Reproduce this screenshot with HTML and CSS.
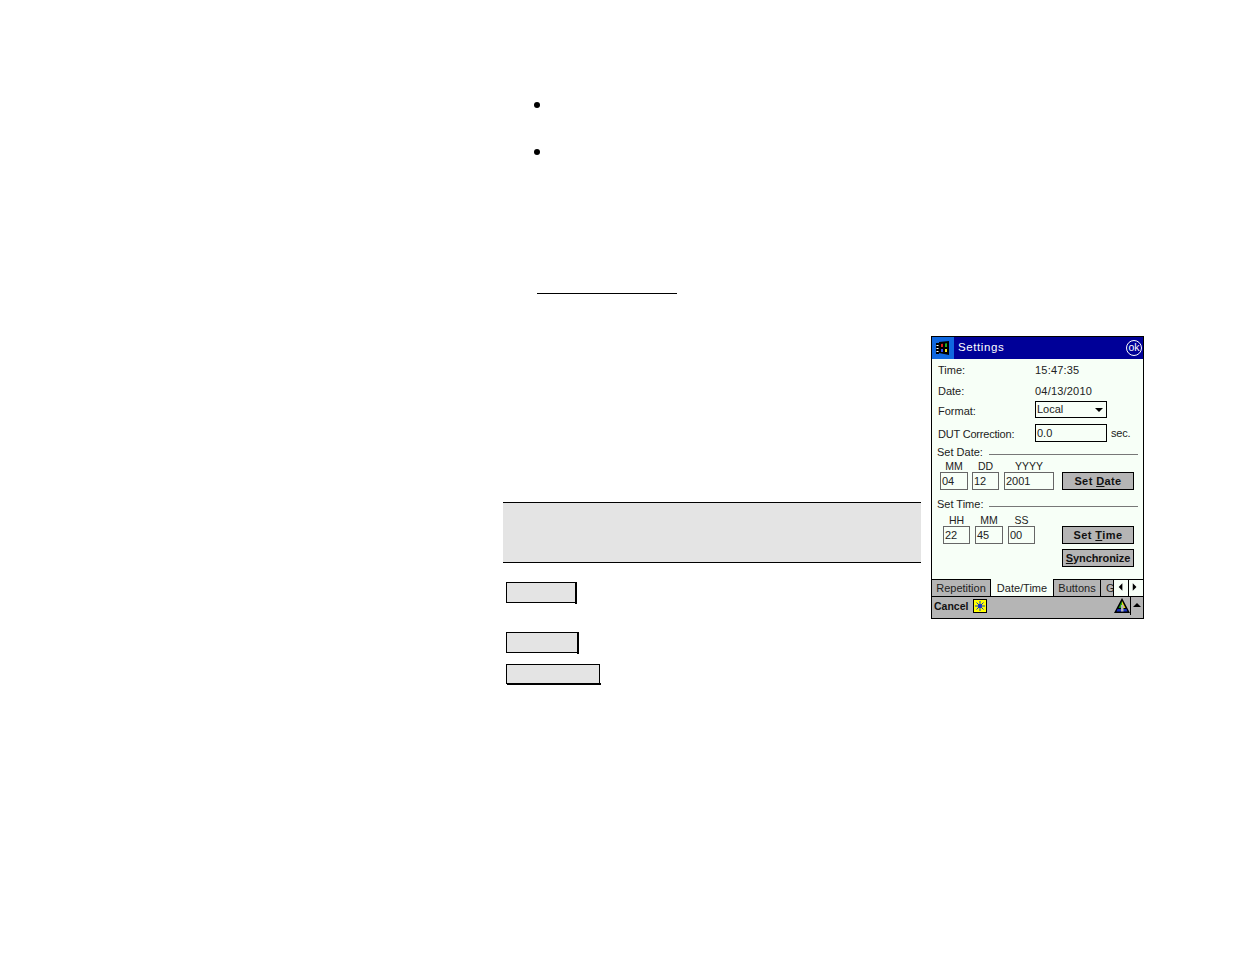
FILE: index.html
```html
<!DOCTYPE html>
<html lang="en">
<head>
    <meta charset="UTF-8">
    <title>Settings</title>
    <link rel="stylesheet" href="styles.css">
</head>
<body>
    <div class="page">
        <div class="text-col">
            <ul class="bullets">
                <li></li>
                <li></li>
            </ul>
            <div class="link-rule"></div>
            <div class="note-band"></div>
            <div class="key key-first"></div>
            <div class="key key-second"></div>
            <div class="key key-wide"></div>
        </div>

        <div class="device">
            <div class="titlebar">
                <div class="start-btn">
                    <svg width="16" height="16" viewBox="0 0 16 16">
                        <path d="M1 3h3v11H1zM4 2l10-1v14L4 13z" fill="#000"/>
                        <path d="M1.500 5h2v1h-2zM1.500 8h2v1h-2zM1.500 11h2v1h-2z" fill="#fff"/>
                        <path d="M6 4l2-.3V7H6z" fill="#e02020"/>
                        <path d="M10 3.500l2-.3V7h-2z" fill="#20b020"/>
                        <path d="M6 9h2v3H6z" fill="#3050f0"/>
                        <path d="M10 9h2v3h-2z" fill="#f0e020"/>
                    </svg>
                </div>
                <span class="title">Settings</span>
                <span class="ok-btn">ok</span>
            </div>

            <div class="form">
                <div class="row row-time"><span>Time:</span><span class="value">15:47:35</span></div>
                <div class="row row-date"><span>Date:</span><span class="value">04/13/2010</span></div>
                <div class="row row-format">
                    <span class="row-label">Format:</span>
                    <div class="field select-field">Local<i class="select-arrow"></i></div>
                </div>
                <div class="row row-dut">
                    <span class="dut-label">DUT Correction:</span>
                    <div class="field dut-field">0.0</div>
                    <span class="unit">sec.</span>
                </div>

                <div class="group-head"><span>Set Date:</span><i></i></div>
                <div class="entry-row date-entry">
                    <div class="entry w-mm"><label>MM</label><div class="field">04</div></div>
                    <div class="entry w-dd"><label>DD</label><div class="field">12</div></div>
                    <div class="entry w-yyyy"><label>YYYY</label><div class="field">2001</div></div>
                    <button class="pda-btn">Set <u>D</u>ate</button>
                </div>

                <div class="group-head head-time"><span>Set Time:</span><i></i></div>
                <div class="entry-row time-entry">
                    <div class="entry w-hh"><label>HH</label><div class="field">22</div></div>
                    <div class="entry w-min"><label>MM</label><div class="field">45</div></div>
                    <div class="entry w-ss"><label>SS</label><div class="field">00</div></div>
                    <button class="pda-btn">Set <u>T</u>ime</button>
                </div>
                <div class="sync-row">
                    <button class="pda-btn sync-btn"><u>S</u>ynchronize</button>
                </div>
            </div>

            <div class="tabs">
                <div class="tab tab-rep">Repetition</div>
                <div class="tab tab-active">Date/Time</div>
                <div class="tab tab-buttons">Buttons</div>
                <div class="tab tab-clipped">G</div>
                <div class="tab-arrows">
                    <svg width="15" height="16" viewBox="0 0 15 16"><path d="M9 3v8L5 7z" fill="#000"/></svg>
                    <svg width="15" height="16" viewBox="0 0 15 16"><path d="M4 3v8l4-4z" fill="#000"/></svg>
                </div>
            </div>

            <div class="toolbar">
                <span class="cancel">Cancel</span>
                <div class="sip-icon">
                    <svg width="10" height="10" viewBox="0 0 10 10">
                        <path d="M5 0v10M0 5h10M1.500 1.500l7 7M8.500 1.500l-7 7" stroke="#1030d0" stroke-width="1"/>
                        <circle cx="5" cy="5" r="2" fill="#1030d0"/>
                    </svg>
                </div>
                <div class="tray">
                    <svg class="tray-icon" width="16" height="16" viewBox="0 0 16 16">
                        <path d="M8 0L0 15h16z" fill="#000"/>
                        <path d="M8 3L4.500 10H8z" fill="#18a018"/>
                        <path d="M8 3l3.500 7H8z" fill="#e8d818"/>
                        <path d="M3.500 11h9l1 2.500h-11z" fill="#1830c0"/>
                        <path d="M7 7h2.500v6.500H7z" fill="#b5b5b5"/>
                    </svg>
                    <div class="tray-up"></div>
                </div>
            </div>
        </div>
    </div>
</body>
</html>
```

FILE: styles.css
```css
* {
    margin: 0;
    padding: 0;
    box-sizing: border-box;
}

body {
    background: #fff;
    font-family: "Liberation Sans", Arial, sans-serif;
}

.page {
    display: flex;
    align-items: flex-start;
    gap: 10px;
    height: 954px;
    padding-left: 503px;
}

.text-col {
    width: 418px;
    padding-top: 80px;
}

.bullets {
    list-style: none;
    padding-left: 31px;
}

.bullets li {
    height: 47px;
    padding-top: 22px;
}

.bullets li::before {
    content: "";
    display: block;
    width: 6px;
    height: 6px;
    background: #000;
    border-radius: 50%;
}

.link-rule {
    width: 140px;
    height: 1px;
    margin: 119px 0 0 34px;
    background: #000;
}

.note-band {
    height: 61px;
    margin-top: 208px;
    background: #e4e4e4;
    border-top: 1px solid #000;
    border-bottom: 1px solid #000;
}

.key {
    position: relative;
    height: 21px;
    margin-left: 3px;
    background: #e4e4e4;
    border: 1px solid #000;
}

.key::after {
    content: "";
    position: absolute;
    background: #000;
}

.key-first {
    width: 70px;
    margin-top: 19px;
}

.key-second {
    width: 72px;
    margin-top: 29px;
}

.key-first::after,
.key-second::after {
    top: -1px;
    right: -2px;
    width: 2px;
    height: 22px;
}

.key-wide {
    width: 94px;
    height: 20px;
    margin-top: 11px;
}

.key-wide::after {
    left: 0;
    right: -2px;
    bottom: -2px;
    height: 2px;
}

/* pocket pc screen */
.device {
    display: flex;
    flex-direction: column;
    width: 213px;
    height: 283px;
    margin-top: 336px;
    border: 1px solid #000;
    background: #f7fff7;
    font-size: 11px;
    color: #222;
}

.titlebar {
    display: flex;
    align-items: center;
    height: 22px;
    background: #000098;
    color: #fff;
}

.start-btn {
    display: flex;
    align-items: center;
    justify-content: center;
    width: 22px;
    height: 22px;
    background: #1068e0;
}

.title {
    flex: 1;
    margin-left: 4px;
    padding-bottom: 2px;
    font-size: 11.500px;
    letter-spacing: 0.6px;
}

.ok-btn {
    width: 16px;
    height: 16px;
    margin-right: 1px;
    border: 1px solid #fff;
    border-radius: 50%;
    font-size: 10.500px;
    line-height: 13px;
    text-align: center;
}

.form {
    flex: 1;
    padding: 1px 5px 0 5px;
}

.row {
    display: grid;
    grid-template-columns: 97px auto 1fr;
    align-items: center;
    padding-left: 1px;
}

.value {
    letter-spacing: 0.2px;
}

.row-time {
    height: 20px;
}

.row-date {
    height: 20px;
    margin-top: 1px;
}

.row-format {
    height: 17px;
}

.row-dut {
    height: 18px;
    margin-top: 6px;
}

.row-label {
    padding-top: 3px;
}

.dut-label {
    padding-top: 1px;
    letter-spacing: -0.2px;
}

.field {
    height: 18px;
    padding-left: 1px;
    border: 1px solid #000;
    background: #f7fff7;
    line-height: 16px;
}

.select-field {
    position: relative;
    width: 72px;
    height: 17px;
    line-height: 14px;
}

.select-arrow {
    position: absolute;
    top: 6px;
    right: 3px;
    border: 4px solid transparent;
    border-top-color: #000;
    border-bottom: 0;
}

.dut-field {
    width: 72px;
}

.unit {
    margin-left: 4px;
    letter-spacing: -0.2px;
}

.group-head {
    display: flex;
    align-items: center;
    height: 14px;
    margin-top: 3px;
}

.group-head i {
    flex: 1;
    height: 1px;
    margin: 4px 0 0 6px;
    background: #777;
}

.head-time {
    margin-top: 7px;
}

.entry-row {
    display: flex;
    align-items: flex-end;
    height: 30px;
    margin-top: 1px;
}

.date-entry {
    padding-left: 3px;
}

.time-entry {
    padding-left: 6px;
    margin-top: 3px;
}

.entry {
    display: flex;
    flex-direction: column;
    margin-right: 4px;
}

.entry label {
    height: 12px;
    font-size: 10.500px;
    line-height: 12px;
    text-align: center;
}

.entry .field {
    border-color: #666;
}

.w-mm { width: 28px; }
.w-dd { width: 27px; margin-right: 5px; }
.w-yyyy { width: 50px; margin-right: 8px; }
.w-hh { width: 27px; margin-right: 5px; }
.w-min { width: 28px; margin-right: 5px; }
.w-ss { width: 27px; margin-right: 27px; }

.pda-btn {
    width: 72px;
    height: 18px;
    border: 1px solid #000;
    background: #b5b5b5;
    font-family: inherit;
    font-size: 11px;
    font-weight: bold;
    letter-spacing: 0.4px;
    color: #111;
}

.sync-row {
    display: flex;
    justify-content: flex-end;
    margin-top: 5px;
    padding-right: 4px;
}

.sync-btn {
    letter-spacing: -0.1px;
}

.tabs {
    display: flex;
    height: 17px;
    background: #f7fff7;
}

.tab {
    flex: none;
    height: 17px;
    border-top: 1px solid #000;
    border-right: 1px solid #000;
    background: #b5b5b5;
    line-height: 16px;
    text-align: center;
}

.tab-rep {
    width: 59px;
}

.tab-active {
    width: 63px;
    border-top: 0;
    background: #f7fff7;
    line-height: 18px;
}

.tab-buttons {
    width: 47px;
}

.tab-clipped {
    width: 12px;
    border-right: 0;
    overflow: hidden;
    text-align: left;
    padding-left: 5px;
}

.tab-arrows {
    display: flex;
    flex: 1;
    background: #f7fff7;
    border-top: 1px solid #000;
    border-left: 1px solid #000;
}

.tab-arrows svg {
    flex: none;
    border-right: 1px solid #000;
}

.toolbar {
    display: flex;
    align-items: center;
    height: 22px;
    padding-bottom: 3px;
    background: #b5b5b5;
    border-top: 1px solid #000;
}

.cancel {
    margin-left: 2px;
    font-weight: bold;
    font-size: 10.500px;
    color: #111;
}

.sip-icon {
    display: flex;
    align-items: center;
    justify-content: center;
    width: 14px;
    height: 14px;
    margin-left: 5px;
    background: #ffff00;
    border: 1px solid #000;
}

.tray {
    display: flex;
    align-items: center;
    height: 18px;
    margin-left: auto;
}

.tray-up {
    position: relative;
    width: 12px;
    height: 18px;
    margin-right: 1px;
    border-left: 1px solid #000;
}

.tray-up::after {
    content: "";
    position: absolute;
    top: 6px;
    left: 2px;
    border: 4px solid transparent;
    border-bottom-color: #000;
    border-top: 0;
}
```
